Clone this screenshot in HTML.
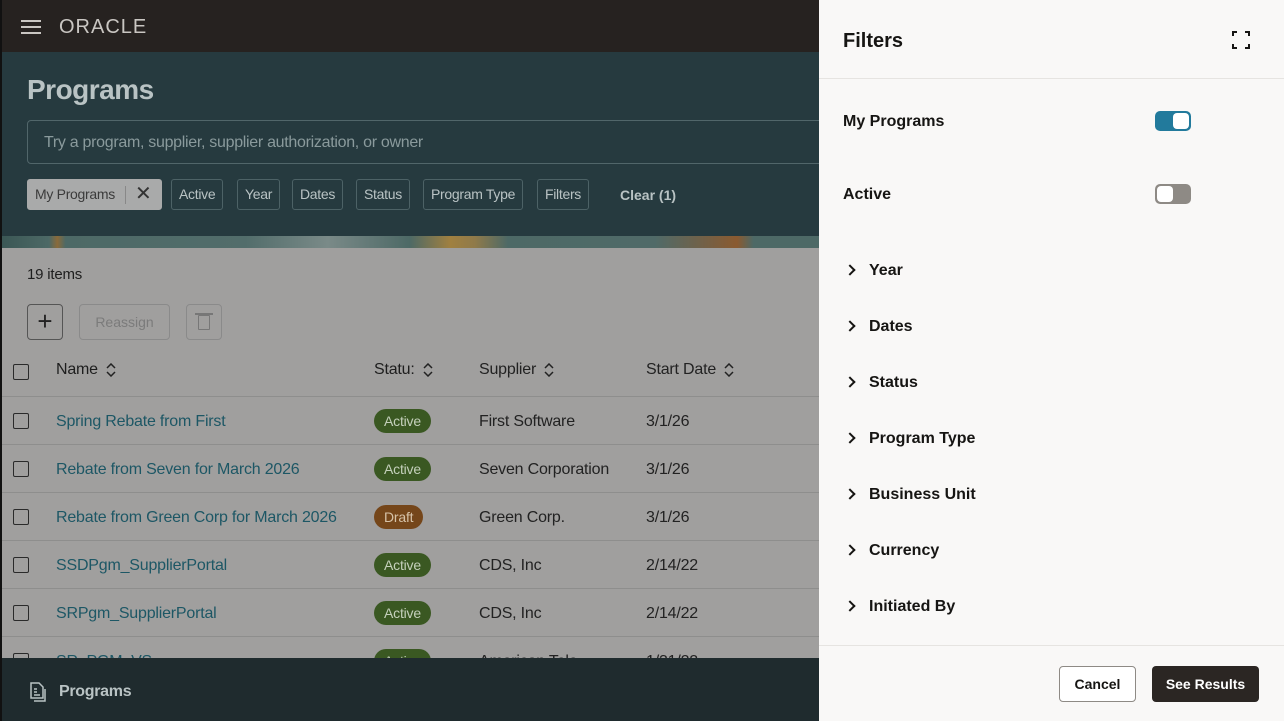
<!DOCTYPE html>
<html><head><meta charset="utf-8"><style>
*{margin:0;padding:0;box-sizing:border-box}
body{width:1284px;height:721px;overflow:hidden;position:relative;font-family:"Liberation Sans",sans-serif;background:#a09f9e}
.a{position:absolute}
.chip{position:absolute;top:179px;height:31px;border:1px solid #4d6266;border-radius:3px;color:#b9c3c4;font-size:14px;line-height:29px;padding:0 7px;letter-spacing:-.3px}
.row{position:absolute;left:2px;width:817px;height:48px;border-top:1px solid #8e8e8d;font-size:16px;letter-spacing:-.2px}
.row span{position:absolute;top:16px}
.cb{position:absolute;left:11px;top:16px;width:16px;height:16px;border:1.5px solid #2a2a2a;border-radius:2px}
.lk{left:54px;color:#1d5765}
.badge{position:absolute;left:372px;top:12px;height:24px;border-radius:12px;color:#c4d0bb;background:#3a5822;font-size:14px;line-height:24px;padding:0 10px}
.sup{left:477px;color:#222}
.dt{left:644px;color:#222}
.fl{position:absolute;left:843px;font-size:16px;font-weight:bold;color:#161513}
.chev{position:absolute;left:846px;width:8px;height:8px;border-right:2px solid #161513;border-top:2px solid #161513;transform:rotate(45deg)}
.srt{display:inline-block;vertical-align:middle;margin-left:8px}
</style></head><body>
<div class="a" style="left:0;top:0;width:819px;height:52px;background:#262220"></div>
<div class="a" style="left:21px;top:20px;width:20px;height:2px;background:#c9c6c2;box-shadow:0 6px 0 #c9c6c2,0 12px 0 #c9c6c2"></div>
<div class="a" style="left:59px;top:16px;color:#c9c6c2;font-size:20px;letter-spacing:1px">ORACLE</div>
<div class="a" style="left:0;top:52px;width:819px;height:184px;background:#263a3f"></div>
<div class="a" style="left:27px;top:74px;color:#b9c3c4;font-size:28px;font-weight:bold;letter-spacing:-.5px">Programs</div>
<div class="a" style="left:27px;top:120px;width:800px;height:44px;border:1px solid #51666a;border-radius:4px"></div>
<div class="a" style="left:44px;top:134px;color:#8a9a9c;font-size:16px;letter-spacing:-.3px">Try a program, supplier, supplier authorization, or owner</div>
<div class="chip" style="left:27px;width:135px;background:#a9aaaa;color:#3b3b3b;border-color:#a9aaaa">My Programs <span style="position:absolute;left:97px;top:6px;width:1px;height:18px;background:#888"></span><span style="position:absolute;left:107px;top:0;font-size:20px;color:#333">✕</span></div>
<div class="chip" style="left:171px">Active</div>
<div class="chip" style="left:237px">Year</div>
<div class="chip" style="left:292px">Dates</div>
<div class="chip" style="left:356px">Status</div>
<div class="chip" style="left:423px">Program Type</div>
<div class="chip" style="left:537px">Filters</div>
<div class="a" style="left:620px;top:187px;color:#b9c3c4;font-size:14px;font-weight:bold">Clear (1)</div>
<div class="a" style="left:0;top:236px;width:819px;height:12px;background:linear-gradient(90deg,#3a5654 0,#4d6966 6%,#8a6a3a 7%,#4d6966 8%,#526d6b 30%,#7a8a88 40%,#4d6966 50%,#a08040 55%,#8f7a4a 58%,#4d6966 62%,#506a68 80%,#8a5a30 90%,#4d6966 92%)"></div>
<div class="a" style="left:27px;top:266px;color:#1e1e1e;font-size:15px;letter-spacing:-.2px">19 items</div>
<div class="a" style="left:27px;top:304px;width:36px;height:36px;border:1px solid #555;border-radius:4px;font-size:26px;line-height:32px;text-align:center;color:#222">+</div>
<div class="a" style="left:79px;top:304px;width:91px;height:36px;border:1px solid #8a8a8a;border-radius:4px;font-size:14px;line-height:34px;text-align:center;color:#7b7b7b">Reassign</div>
<div class="a" style="left:186px;top:304px;width:36px;height:36px;border:1px solid #8a8a8a;border-radius:4px"><div class="a" style="left:11px;top:10px;width:12px;height:15px;border:1.5px solid #777;border-radius:1px"></div><div class="a" style="left:8px;top:8px;width:18px;height:1.5px;background:#777"></div></div>
<div class="row" style="top:348px;border:none"><div class="cb"></div>
<span style="left:54px;color:#1e1e1e;top:13px">Name<svg class="srt" width="10" height="14" viewBox="0 0 10 14" fill="none" stroke="#222" stroke-width="1.5"><path d="M1 5l4-4 4 4M1 9l4 4 4-4"/></svg></span>
<span style="left:372px;color:#1e1e1e;top:13px">Statu:<svg class="srt" width="10" height="14" viewBox="0 0 10 14" fill="none" stroke="#222" stroke-width="1.5"><path d="M1 5l4-4 4 4M1 9l4 4 4-4"/></svg></span>
<span class="sup" style="top:13px">Supplier<svg class="srt" width="10" height="14" viewBox="0 0 10 14" fill="none" stroke="#222" stroke-width="1.5"><path d="M1 5l4-4 4 4M1 9l4 4 4-4"/></svg></span>
<span class="dt" style="top:13px">Start Date<svg class="srt" width="10" height="14" viewBox="0 0 10 14" fill="none" stroke="#222" stroke-width="1.5"><path d="M1 5l4-4 4 4M1 9l4 4 4-4"/></svg></span></div>
<div class="row" style="top:396px"><div class="cb"></div><span class="lk">Spring Rebate from First</span><div class="badge">Active</div><span class="sup">First Software</span><span class="dt">3/1/26</span></div>
<div class="row" style="top:444px"><div class="cb"></div><span class="lk">Rebate from Seven for March 2026</span><div class="badge">Active</div><span class="sup">Seven Corporation</span><span class="dt">3/1/26</span></div>
<div class="row" style="top:492px"><div class="cb"></div><span class="lk">Rebate from Green Corp for March 2026</span><div class="badge" style="background:#75461a;color:#d6c2a8">Draft</div><span class="sup">Green Corp.</span><span class="dt">3/1/26</span></div>
<div class="row" style="top:540px"><div class="cb"></div><span class="lk">SSDPgm_SupplierPortal</span><div class="badge">Active</div><span class="sup">CDS, Inc</span><span class="dt">2/14/22</span></div>
<div class="row" style="top:588px"><div class="cb"></div><span class="lk">SRPgm_SupplierPortal</span><div class="badge">Active</div><span class="sup">CDS, Inc</span><span class="dt">2/14/22</span></div>
<div class="row" style="top:636px"><div class="cb"></div><span class="lk">SR_PGM_VS</span><div class="badge">Active</div><span class="sup">American Tele</span><span class="dt">1/31/22</span></div>
<div class="a" style="left:0;top:658px;width:819px;height:63px;background:#1f2b2e"></div>
<svg class="a" style="left:29px;top:682px" width="18" height="20" viewBox="0 0 18 20" fill="none" stroke="#b9c3c4" stroke-width="1.5"><path d="M2 1h8l4 4v11H2z M5 19h11V7 M5 7h3M5 10h3M5 13h6"/></svg>
<div class="a" style="left:59px;top:683px;color:#b9c3c4;font-size:16px;font-weight:bold;letter-spacing:-.3px">Programs</div>
<div class="a" style="left:0;top:0;width:2px;height:721px;background:#111"></div>
<div class="a" style="left:819px;top:0;width:465px;height:721px;background:#f9f8f7"></div>
<div class="a" style="left:819px;top:78px;width:465px;height:1px;background:#e6e4e1"></div>
<div class="a" style="left:819px;top:645px;width:465px;height:1px;background:#e6e4e1"></div>
<div class="a" style="left:843px;top:30px;font-size:20px;font-weight:bold;color:#161513">Filters</div>
<svg class="a" style="left:1232px;top:31px" width="18" height="18" viewBox="0 0 18 18" fill="none" stroke="#161513" stroke-width="2"><path d="M1 5V1h4M13 1h4v4M17 13v4h-4M5 17H1v-4"/></svg>
<div class="fl" style="top:113px">My Programs</div>
<div class="a" style="left:1155px;top:111px;width:36px;height:20px;border-radius:5px;background:#227a9c"><div class="a" style="left:18px;top:2px;width:16px;height:16px;border-radius:4px;background:#fff"></div></div>
<div class="fl" style="top:186px">Active</div>
<div class="a" style="left:1155px;top:184px;width:36px;height:20px;border-radius:5px;background:#8e8a85"><div class="a" style="left:2px;top:2px;width:16px;height:16px;border-radius:4px;background:#fff"></div></div>
<div class="chev" style="top:266px"></div><div class="fl" style="left:869px;top:262px">Year</div>
<div class="chev" style="top:322px"></div><div class="fl" style="left:869px;top:318px">Dates</div>
<div class="chev" style="top:378px"></div><div class="fl" style="left:869px;top:374px">Status</div>
<div class="chev" style="top:434px"></div><div class="fl" style="left:869px;top:430px">Program Type</div>
<div class="chev" style="top:490px"></div><div class="fl" style="left:869px;top:486px">Business Unit</div>
<div class="chev" style="top:546px"></div><div class="fl" style="left:869px;top:542px">Currency</div>
<div class="chev" style="top:602px"></div><div class="fl" style="left:869px;top:598px">Initiated By</div>
<div class="a" style="left:1059px;top:666px;width:77px;height:36px;border:1px solid #8e8a85;border-radius:4px;background:#fff;font-size:14px;font-weight:bold;line-height:34px;text-align:center;color:#161513">Cancel</div>
<div class="a" style="left:1152px;top:666px;width:107px;height:36px;border-radius:4px;background:#2b2623;font-size:14px;font-weight:bold;line-height:36px;text-align:center;color:#fff">See Results</div>
</body></html>
